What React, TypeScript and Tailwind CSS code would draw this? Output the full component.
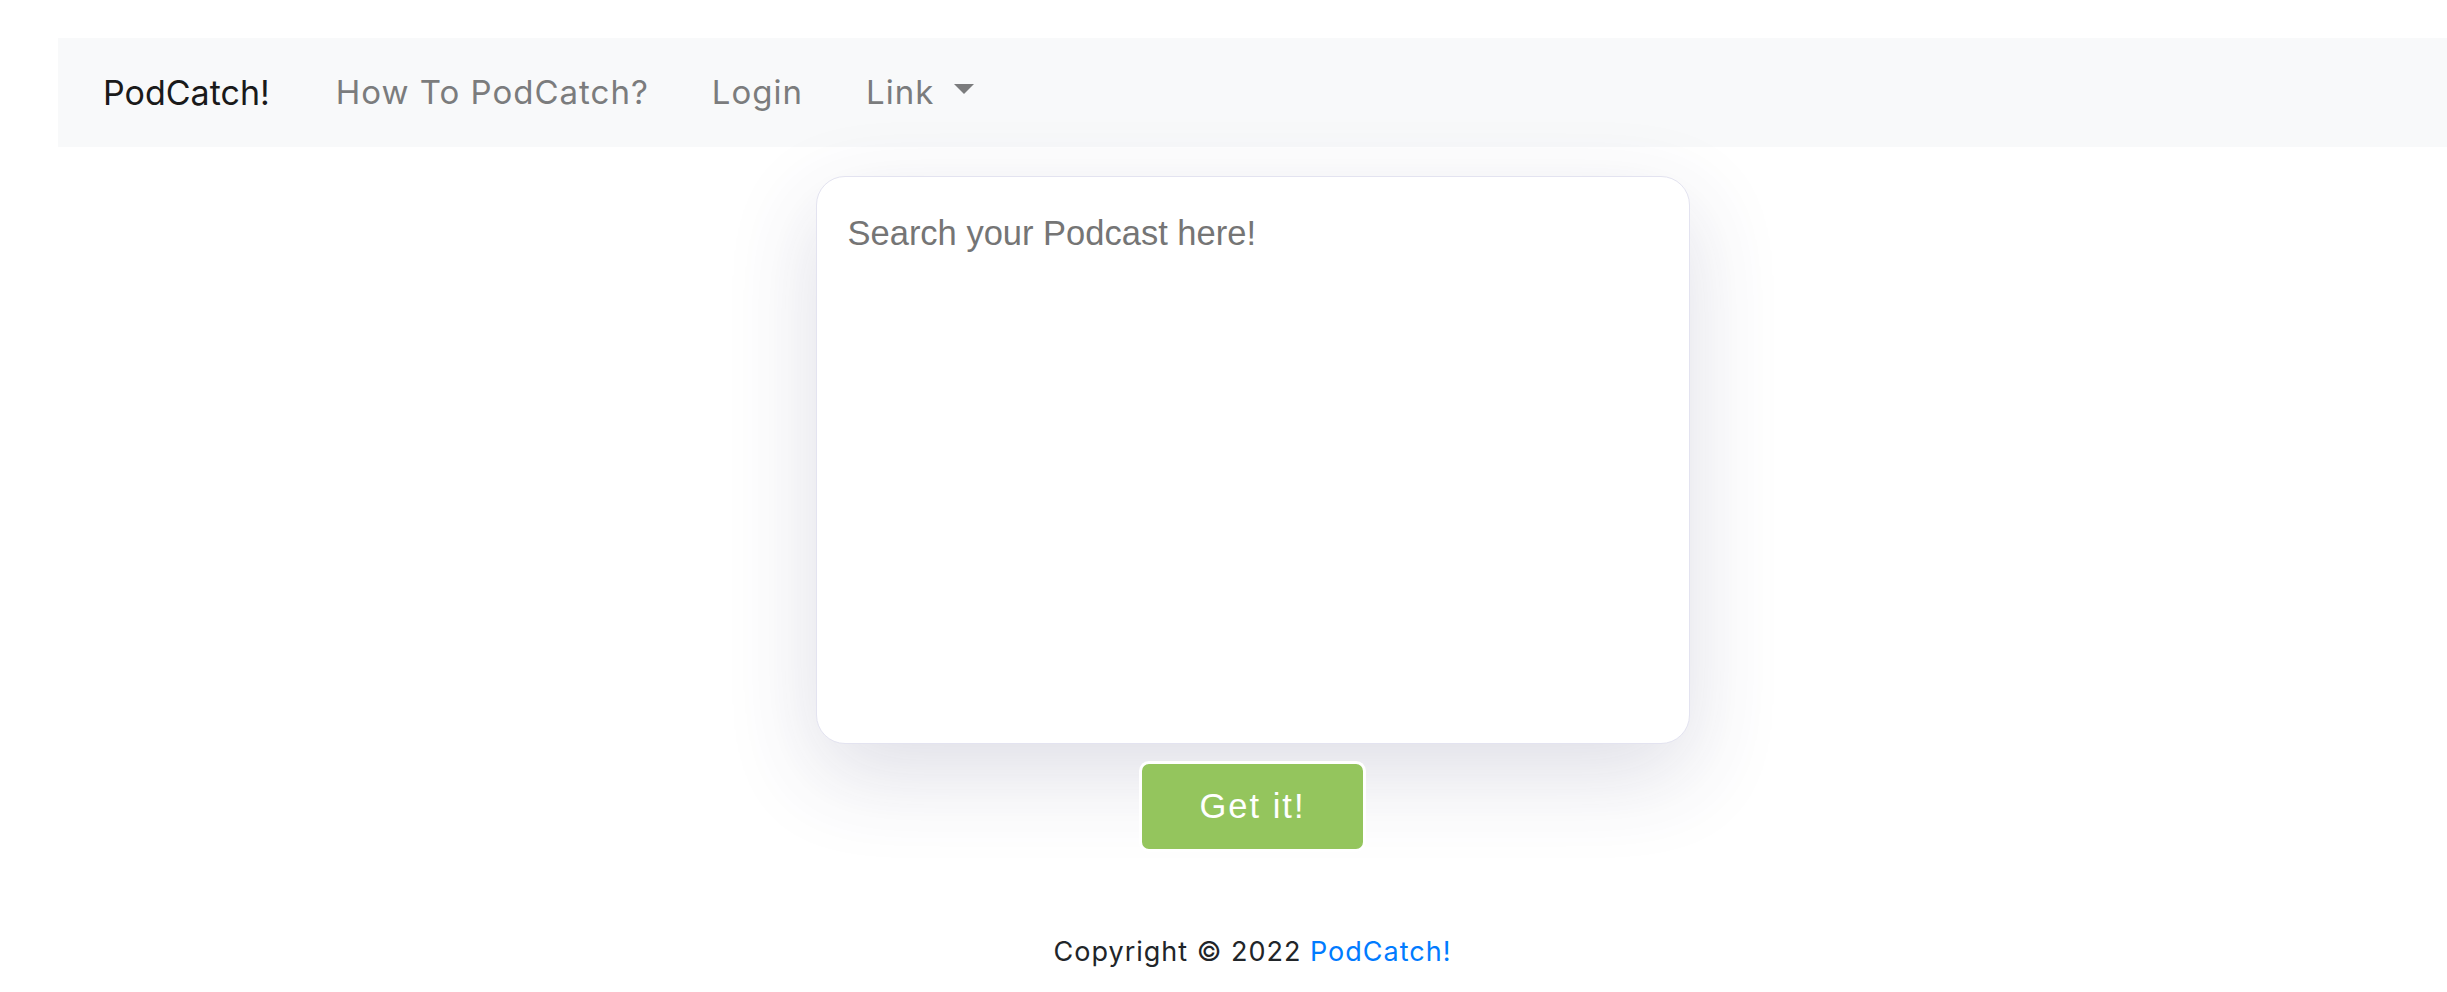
export default function App() {
  const links = ['How To PodCatch?', 'Login'];

  return (
    <div className="min-h-screen bg-white pl-[58px] pt-[38px] font-['Inter',sans-serif]">
      <nav className="flex h-[109px] items-center bg-[#f8f9fa] pl-[45px]">
        <a className="text-[34px] text-[#1a1a1a]">PodCatch!</a>
        <ul className="ml-[66px] flex items-center gap-[63px]">
          {links.map((label) => (
            <li key={label} className="text-[33px] tracking-[1px] text-[#7b7c7d]">
              {label}
            </li>
          ))}
          <li className="flex items-center gap-[20px] text-[33px] tracking-[1px] text-[#7b7c7d]">
            Link
            <span className="-translate-y-[4px] border-x-[10px] border-t-[10px] border-x-transparent border-t-[#7b7c7d]" />
          </li>
        </ul>
      </nav>

      <main className="flex flex-col items-center">
        <textarea
          placeholder="Search your Podcast here!"
          className="mt-[29px] h-[568px] w-[874px] resize-none rounded-[29px] border border-[#e3e3f0] bg-white p-[31px] font-['Liberation_Sans',Arial,sans-serif] text-[34.5px] leading-[1.5] text-[#333] shadow-[0_30px_90px_rgba(50,50,100,0.16)] outline-none placeholder:text-[#757575]"
        />
        <button className="mt-[17px] h-[91px] w-[227px] rounded-[10px] border-[3px] border-white bg-[#94c55d] font-['Liberation_Sans',Arial,sans-serif] text-[34.5px] tracking-[2px] text-white">
          Get it!
        </button>
        <footer className="mt-[80px] text-[27px] leading-[1.5] tracking-[1px] text-[#212529]">
          Copyright © 2022 <a className="text-[#007bff]">PodCatch!</a>
        </footer>
      </main>
    </div>
  );
}
